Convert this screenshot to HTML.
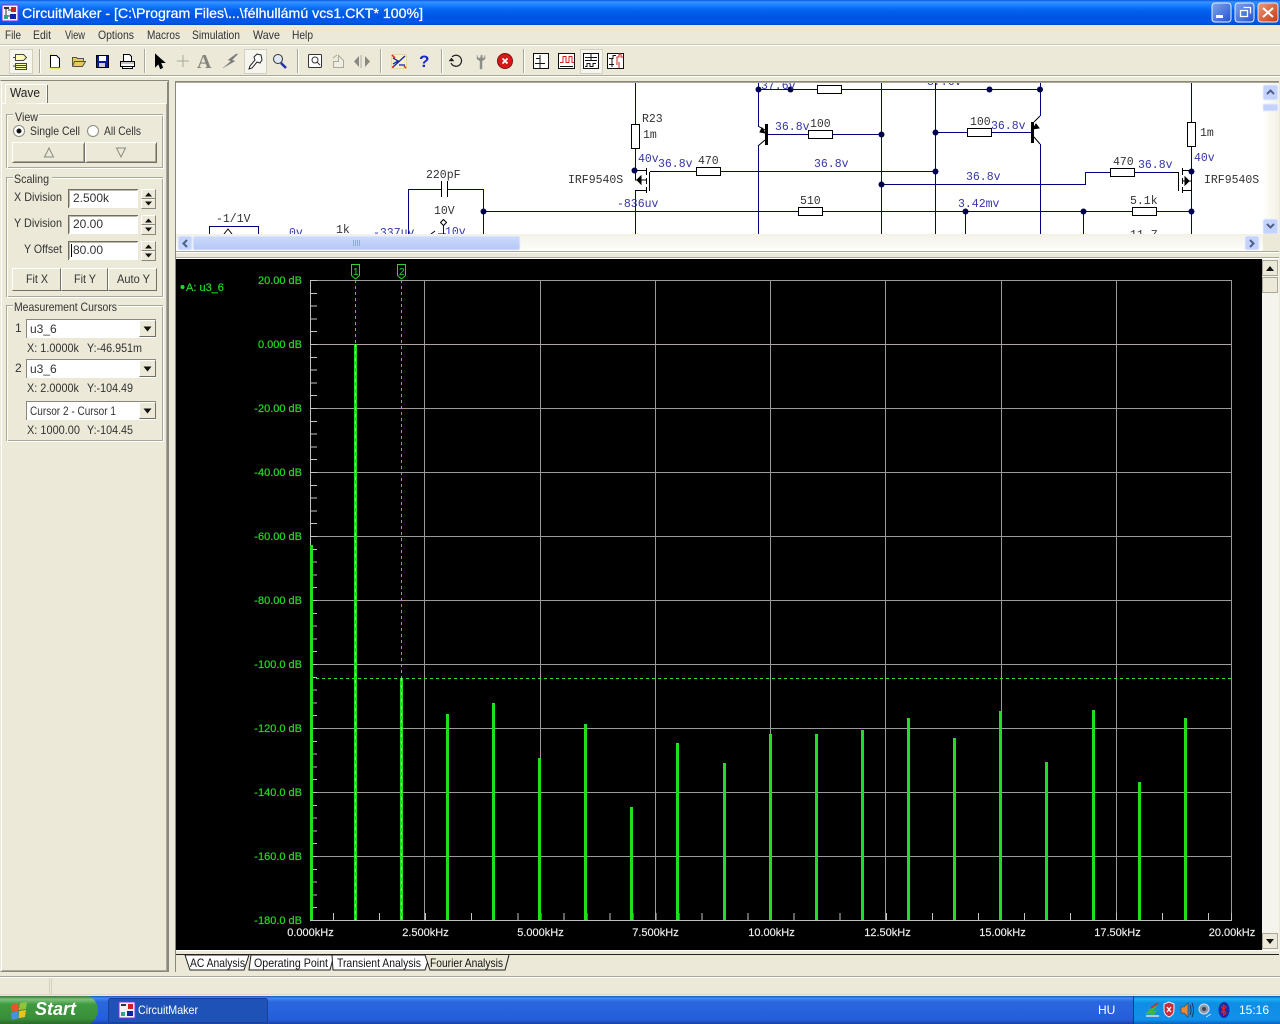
<!DOCTYPE html>
<html><head><meta charset="utf-8"><title>CircuitMaker</title>
<style>
html,body{margin:0;padding:0;background:#ece9d8;overflow:hidden}
svg{display:block}
text{font-family:"Liberation Sans",sans-serif;font-size:12px;fill:#222}
.t{font-size:12px;fill:#333}
.m text,.m{font-family:"Liberation Mono",monospace;font-size:11.5px;fill:#333}
.b{fill:#3535a8 !important}
.y text{font-size:11px;fill:#22dd22;stroke:#22dd22;stroke-width:.2;text-anchor:end}
.x text{font-size:11px;fill:#f0f0f0;stroke:#f0f0f0;stroke-width:.15;text-anchor:middle}
.c{shape-rendering:crispEdges}
</style></head><body>
<svg width="1280" height="1024" viewBox="0 0 1280 1024" xmlns="http://www.w3.org/2000/svg">
<defs>
<linearGradient id="tb" x1="0" y1="0" x2="0" y2="1"><stop offset="0" stop-color="#0a58e0"/><stop offset=".08" stop-color="#3a93ff"/><stop offset=".2" stop-color="#1a80ff"/><stop offset=".42" stop-color="#0262ee"/><stop offset=".7" stop-color="#0054e3"/><stop offset=".9" stop-color="#0058ea"/><stop offset="1" stop-color="#0046c8"/></linearGradient>
<linearGradient id="task" x1="0" y1="0" x2="0" y2="1"><stop offset="0" stop-color="#1f54b8"/><stop offset=".08" stop-color="#3f8cf3"/><stop offset=".2" stop-color="#2a68de"/><stop offset=".85" stop-color="#245edb"/><stop offset="1" stop-color="#1941a5"/></linearGradient>
<linearGradient id="tray" x1="0" y1="0" x2="0" y2="1"><stop offset="0" stop-color="#0c59b9"/><stop offset=".1" stop-color="#19b4f0"/><stop offset=".25" stop-color="#0f8ee6"/><stop offset=".85" stop-color="#1090e8"/><stop offset="1" stop-color="#0a5fc0"/></linearGradient>
<linearGradient id="start" x1="0" y1="0" x2="0" y2="1"><stop offset="0" stop-color="#2f7a2f"/><stop offset=".12" stop-color="#7fc07f"/><stop offset=".3" stop-color="#3f9a3f"/><stop offset=".8" stop-color="#3a8f3a"/><stop offset="1" stop-color="#2a6a2a"/></linearGradient>
<linearGradient id="min" x1="0" y1="0" x2="1" y2="1"><stop offset="0" stop-color="#7fa5f0"/><stop offset="1" stop-color="#2453cf"/></linearGradient>
<linearGradient id="cls" x1="0" y1="0" x2="1" y2="1"><stop offset="0" stop-color="#ea9a80"/><stop offset="1" stop-color="#c9370c"/></linearGradient>
<linearGradient id="sc" x1="0" y1="0" x2="1" y2="0"><stop offset="0" stop-color="#fefefb"/><stop offset="1" stop-color="#f3f1e6"/></linearGradient>
<linearGradient id="sh" x1="0" y1="0" x2="0" y2="1"><stop offset="0" stop-color="#f3f1e6"/><stop offset="1" stop-color="#fefefb"/></linearGradient>
<linearGradient id="thumb" x1="0" y1="0" x2="0" y2="1"><stop offset="0" stop-color="#cddafb"/><stop offset="1" stop-color="#b4c8f6"/></linearGradient>
<clipPath id="sch"><rect x="177" y="83" width="1086" height="151"/></clipPath>
<g id="spin"><rect x="0" y="0" width="15" height="20" fill="#ece9d8"/><path d="M.5 19V.5H14.500M.5 10H14.500" stroke="#fff" fill="none"/><path d="M14.500 .5V19.500H.5M.5 9.500H14.500" stroke="#8a887c" fill="none"/><path d="M7.500 3.500l3.500 4h-7zM7.500 16.500l3.500-4h-7z" fill="#111"/></g>
<g id="drop"><rect x="0" y="0" width="17" height="17" fill="#ece9d8"/><path d="M.5 16V.5H16" stroke="#fff" fill="none"/><path d="M16.500 .5V16.500H.5" stroke="#716f64" fill="none"/><path d="M4.500 6.500h8l-4 5z" fill="#111"/></g>
</defs>

<!-- window background -->
<rect width="1280" height="1024" fill="#ece9d8"/>

<!-- title bar -->
<rect x="0" y="0" width="1280" height="25" fill="url(#tb)"/>
<g class="c"><rect x="2" y="5" width="16" height="16" fill="#f4f0f8" stroke="#8a2be2"/><rect x="4" y="7" width="5" height="2" fill="#333"/><rect x="11" y="7" width="5" height="5" fill="#c22"/><rect x="10" y="14" width="6" height="5" fill="#12a"/><rect x="4" y="15" width="4" height="4" fill="#2a8"/><path d="M6 9v6M8 10h3M8 16h2" stroke="#333"/></g>
<text x="22" y="18" textLength="401" lengthAdjust="spacingAndGlyphs" style="font-size:14px;fill:#fff;stroke:#fff;stroke-width:.25">CircuitMaker - [C:\Program Files\...\félhullámú vcs1.CKT* 100%]</text>
<g>
<rect x="1212" y="3" width="19" height="19" rx="3" fill="url(#min)" stroke="#e8eefc"/><rect x="1216" y="15" width="7" height="3" fill="#fff"/>
<rect x="1235" y="3" width="19" height="19" rx="3" fill="url(#min)" stroke="#e8eefc"/><path d="M1243.500 7.500h7v6M1240.500 10.500h7v6h-7z" fill="none" stroke="#fff" stroke-width="1.300"/>
<rect x="1258" y="3" width="20" height="19" rx="3" fill="url(#cls)" stroke="#f4e4de"/><path d="M1263 8l10 9M1273 8l-10 9" stroke="#fff" stroke-width="2"/>
</g>

<!-- menu -->
<g class="t">
<text class="t" x="5" y="39" textLength="16" lengthAdjust="spacingAndGlyphs">File</text><text class="t" x="33" y="39" textLength="18" lengthAdjust="spacingAndGlyphs">Edit</text><text class="t" x="65" y="39" textLength="20" lengthAdjust="spacingAndGlyphs">View</text><text class="t" x="98" y="39" textLength="36" lengthAdjust="spacingAndGlyphs">Options</text><text class="t" x="147" y="39" textLength="33" lengthAdjust="spacingAndGlyphs">Macros</text><text class="t" x="192" y="39" textLength="48" lengthAdjust="spacingAndGlyphs">Simulation</text><text class="t" x="253" y="39" textLength="27" lengthAdjust="spacingAndGlyphs">Wave</text><text class="t" x="292" y="39" textLength="21" lengthAdjust="spacingAndGlyphs">Help</text>
</g>
<path class="c" d="M0 45.500H1280" stroke="#fff"/><path class="c" d="M0 44.500H1280" stroke="#c9c6b4"/>

<!-- toolbar -->
<path class="c" d="M0 75.500H1280" stroke="#aca899"/><path class="c" d="M0 76.500H1280" stroke="#fff"/>
<g class="c" stroke="#aca899"><path d="M39.500 49V73M144.500 49V73M297.500 49V73M380.500 49V73M441.500 49V73M523.500 49V73"/></g>
<g class="c" stroke="#fff"><path d="M40.500 49V73M145.500 49V73M298.500 49V73M381.500 49V73M442.500 49V73M524.500 49V73"/></g>
<g class="c"><rect x="9.500" y="49.500" width="23" height="24" fill="#f6f5ee" stroke="#d2d0c2"/><rect x="244.500" y="49.500" width="22" height="24" fill="#f6f5ee" stroke="#d2d0c2"/><rect x="580.500" y="49.500" width="22" height="24" fill="#f6f5ee" stroke="#d2d0c2"/></g>
<g fill="none" stroke="#000">
<!-- chip -->
<path d="M15.500 54.500h8l3 3-3 3h-8z" fill="#fdfdb0" stroke="#444"/><path d="M15.500 63.500h11v6h-11z" fill="#fdfdb0" stroke="#444"/><path d="M15 65.500h12M15 67.500h12M13 57.500h3M13 66h3" stroke="#444"/>
<!-- new -->
<path d="M50.500 55.500h6l3 3v9h-9z" fill="#fff"/><path d="M50 54h2M49 68h12" stroke="#e8e800"/>
<!-- open -->
<path d="M72.500 66.500v-9h4l1 1h6v3h-9l-2 5zm2-5h11l-3 5h-10" fill="#e8c860" stroke="#554"/>
<!-- save -->
<rect x="96.500" y="55.500" width="12" height="12" fill="#0a1a9a"/><rect x="99" y="56" width="7" height="5" fill="#fff" stroke="none"/><rect x="99" y="63" width="6" height="4" fill="#ccd" stroke="none"/>
<!-- print -->
<path d="M123.500 54.500h6l2 2v5h-8zM120.500 61.500h14v5h-14zM122.500 66.500h10v2h-10z" fill="#fff"/><path d="M121 63h13" stroke="#888"/>
<!-- arrow -->
<path d="M155.500 54.500l0 12 3-3 2 5 2-1-2-5h4z" fill="#000"/>
<!-- plus -->
<path d="M183 55v12M177 61h12" stroke="#a8a698"/>
</g>
<text x="197" y="68" style="font-family:'Liberation Serif',serif;font-size:20px;font-weight:bold;fill:#85847c">A</text>
<g fill="none">
<path d="M236 54l-8 6 3 1-8 7 12-7-3-1 6-6z" fill="#777" stroke="#999" stroke-width=".5"/>
<path d="M261 55l-4-1-3 3 1 3-5 6-1 3 3-1 5-6 3 1 2-3z" stroke="#222" fill="#fff"/>
<circle cx="278" cy="59" r="4.500" stroke="#333" fill="#dfe8f5"/><path d="M281 63l5 5" stroke="#2233aa" stroke-width="2.500"/>
<rect x="308.500" y="54.500" width="13" height="13" rx="1" stroke="#333" fill="#fff"/><circle cx="315" cy="60" r="3" stroke="#333"/><path d="M317 62l3 3" stroke="#333"/>
<path d="M333.500 61.500h5v-6l5 5v7h-10zM333 58l4-3" stroke="#aaa89a" fill="#f0eee4"/>
<path d="M361 55v13" stroke="#aaa"/><path d="M359 56l-5 5.500 5 5.500zM365 56l5 5.500-5 5.500z" fill="#8a8880"/>
<!-- logic -->
<rect x="391.500" y="54.500" width="15" height="14" fill="#f6efc8" stroke="#e2d8a0"/><path d="M393 67l12-11M393 58l5 3-5 3M399 65h6" stroke="#12a" stroke-width="1.300"/><path d="M392 55l3 3M404 66l2 2M392 67h2" stroke="#d22" stroke-width="1.500"/>
</g>
<text x="419" y="67" style="font-size:17px;font-weight:bold;fill:#1a2ac8">?</text>
<g fill="none">
<path d="M452 57a5.500 5.500 0 1 1-1 6" stroke="#222" stroke-width="1.200"/><path d="M449 61h5l-2.500-3z" fill="#222" stroke="#222" stroke-width=".5"/>
<path d="M477 55v4l3 2v8h2v-8l3-2v-4l-1 3h-1.500l-.5-3h-1l-.5 3H478z" fill="#8a8a82" stroke="#999" stroke-width=".5"/>
<circle cx="505" cy="61" r="7.500" fill="#d81818" stroke="#801010"/><path d="M502.500 58.500l5 5M507.500 58.500l-5 5" stroke="#fff" stroke-width="1.800"/>
<g stroke="#111" class="c">
<rect x="533.500" y="53.500" width="15" height="15" fill="#fff"/><path d="M536 58.500h4v-3M540 55v8M535 63.500h10M540 64v4" />
<rect x="558.500" y="53.500" width="16" height="15" fill="#fff"/><path d="M560 62.500h3v-6h3v6h3v-6h3v6h2" stroke="#c22"/><path d="M560 66.500h13"/>
<rect x="583.500" y="53.500" width="15" height="15" fill="#fff"/><path d="M585 57.500h12M591 54v6M585 60.500h12M585 66.500h2v-3h3v3h3v-3h3"/>
<rect x="607.500" y="53.500" width="16" height="15" fill="#fff"/><path d="M609 58.500h4v-3h3M612 58v9M609 64.500h5" /><path d="M617 65v-8h2v-3h2v3h2M619 62v6" stroke="#c22"/>
</g>
</g>

<!-- left panel -->
<g class="c">
<path d="M.5 80.500H168.500V971.500H.5" fill="#ece9d8" stroke="#8a887c"/>
<path d="M1.500 81.500V970.500" stroke="#fff"/>
<path d="M166.500 104V970.500H2" fill="none" stroke="#aca899"/><path d="M167.500 82V971" stroke="#8a887c"/>
<path d="M2 103.500H166" stroke="#fff"/>
<path d="M5.500 104V84.500H46.500V103" fill="#ece9d8" stroke="#fff"/><path d="M47.500 85V103" stroke="#716f64"/>
</g>
<text x="10" y="97" textLength="30" lengthAdjust="spacingAndGlyphs" style="font-size:12.500px">Wave</text>

<!-- groups -->
<g class="c" fill="none">
<rect x="6.500" y="114.500" width="156" height="53" stroke="#aca899"/><rect x="7.500" y="115.500" width="156" height="53" stroke="#fff"/>
<rect x="6.500" y="177.500" width="156" height="119" stroke="#aca899"/><rect x="7.500" y="178.500" width="156" height="119" stroke="#fff"/>
<rect x="6.500" y="305.500" width="156" height="135" stroke="#aca899"/><rect x="7.500" y="306.500" width="156" height="135" stroke="#fff"/>
</g>
<rect x="13" y="110" width="26" height="10" fill="#ece9d8"/><text class="t" x="15" y="121" textLength="23" lengthAdjust="spacingAndGlyphs">View</text>
<rect x="13" y="173" width="39" height="10" fill="#ece9d8"/><text class="t" x="14" y="183" textLength="35" lengthAdjust="spacingAndGlyphs">Scaling</text>
<rect x="13" y="301" width="105" height="10" fill="#ece9d8"/><text class="t" x="14" y="311" textLength="103" lengthAdjust="spacingAndGlyphs">Measurement Cursors</text>

<!-- radios -->
<circle cx="19" cy="131" r="5.500" fill="#fff" stroke="#8a8a80"/><circle cx="19" cy="131" r="2.500" fill="#111"/>
<text class="t" x="30" y="135" textLength="50" lengthAdjust="spacingAndGlyphs">Single Cell</text>
<circle cx="93" cy="131" r="5.500" fill="#fff" stroke="#8a8a80"/>
<text class="t" x="104" y="135" textLength="37" lengthAdjust="spacingAndGlyphs">All Cells</text>

<!-- up/down buttons -->
<g class="c" fill="none">
<path d="M12.500 161.500V142.500H84" stroke="#fff"/><path d="M84.500 142.500V162.500H12.500" stroke="#716f64"/><path d="M83.500 144V161.500H14" stroke="#aca899"/>
<path d="M85.500 161.500V142.500H156" stroke="#fff"/><path d="M156.500 142.500V162.500H85.500" stroke="#716f64"/><path d="M155.500 144V161.500H87" stroke="#aca899"/>
</g>
<path d="M44.500 157l4.500-9 4.500 9z" fill="none" stroke="#8d8b80"/><path d="M116.500 148l4.500 9 4.500-9z" fill="none" stroke="#8d8b80"/>

<!-- scaling -->
<text class="t" x="14" y="201" textLength="48" lengthAdjust="spacingAndGlyphs">X Division</text>
<text class="t" x="14" y="227" textLength="48" lengthAdjust="spacingAndGlyphs">Y Division</text>
<text class="t" x="24" y="253" textLength="38" lengthAdjust="spacingAndGlyphs">Y Offset</text>
<g class="c">
<rect x="68" y="189" width="70" height="19" fill="#fff"/><path d="M68.500 208V189.500H138" fill="none" stroke="#716f64"/><path d="M69.500 207V190.500H137" fill="none" stroke="#bbb8a8"/>
<rect x="68" y="215" width="70" height="19" fill="#fff"/><path d="M68.500 234V215.500H138" fill="none" stroke="#716f64"/><path d="M69.500 233V216.500H137" fill="none" stroke="#bbb8a8"/>
<rect x="68" y="241" width="70" height="19" fill="#fff"/><path d="M68.500 260V241.500H138" fill="none" stroke="#716f64"/><path d="M69.500 259V242.500H137" fill="none" stroke="#bbb8a8"/>
<path d="M71.500 244V257" stroke="#000"/>
</g>
<text class="t" x="73" y="202">2.500k</text><text class="t" x="73" y="228">20.00</text><text class="t" x="73" y="254">80.00</text>
<use href="#spin" x="141" y="189"/><use href="#spin" x="141" y="215"/><use href="#spin" x="141" y="241"/>
<g class="c" fill="none">
<path d="M12.500 289.500V268.500H60" stroke="#fff"/><path d="M60.500 268.500V290.500H12.500" stroke="#716f64"/>
<path d="M61.500 289.500V268.500H107" stroke="#fff"/><path d="M107.500 268.500V290.500H61.500" stroke="#716f64"/>
<path d="M108.500 289.500V268.500H156" stroke="#fff"/><path d="M156.500 268.500V290.500H108.500" stroke="#716f64"/>
</g>
<text class="t" x="26" y="283" textLength="22" lengthAdjust="spacingAndGlyphs">Fit X</text><text class="t" x="74" y="283" textLength="22" lengthAdjust="spacingAndGlyphs">Fit Y</text><text class="t" x="117" y="283" textLength="33" lengthAdjust="spacingAndGlyphs">Auto Y</text>

<!-- cursors -->
<text class="t" x="15" y="332">1</text><text class="t" x="15" y="372">2</text>
<g class="c">
<rect x="26" y="319" width="130" height="19" fill="#fff"/><path d="M26.500 338V319.500H156" fill="none" stroke="#8a887c"/>
<rect x="26" y="359" width="130" height="19" fill="#fff"/><path d="M26.500 378V359.500H156" fill="none" stroke="#8a887c"/>
<rect x="26" y="401" width="130" height="19" fill="#fff"/><path d="M26.500 420V401.500H156" fill="none" stroke="#8a887c"/>
</g>
<use href="#drop" x="139" y="320"/><use href="#drop" x="139" y="360"/><use href="#drop" x="139" y="402"/>
<text class="t" x="30" y="333">u3_6</text><text class="t" x="30" y="373">u3_6</text><text class="t" x="30" y="415" textLength="86" lengthAdjust="spacingAndGlyphs">Cursor 2 - Cursor 1</text>
<text class="t" x="27" y="352" textLength="52" lengthAdjust="spacingAndGlyphs">X: 1.0000k</text><text class="t" x="87" y="352" textLength="55" lengthAdjust="spacingAndGlyphs">Y:-46.951m</text>
<text class="t" x="27" y="392" textLength="52" lengthAdjust="spacingAndGlyphs">X: 2.0000k</text><text class="t" x="87" y="392" textLength="46" lengthAdjust="spacingAndGlyphs">Y:-104.49</text>
<text class="t" x="27" y="434" textLength="53" lengthAdjust="spacingAndGlyphs">X: 1000.00</text><text class="t" x="87" y="434" textLength="46" lengthAdjust="spacingAndGlyphs">Y:-104.45</text>

<!-- right area frame -->
<g class="c" fill="none">
<path d="M175.500 972V81.500H1279" stroke="#8a887c" stroke-width="1"/>
<path d="M176 82.500H1279" stroke="#aca899"/>
</g>

<!-- schematic -->
<rect x="176" y="83" width="1087" height="151" fill="#fff"/>
<g clip-path="url(#sch)">
<g class="c" fill="none" stroke="#000080">
<path d="M635.500 82V124M635.500 148V168M635.500 190V240"/>
<path d="M758.500 82V126M758.500 146V240"/>
<path d="M881.500 82V240M935.500 82V240M1040.500 82V116M1040.500 144V240M1191.500 82V122M1191.500 146V240"/>
<path d="M758 89.500H817M841 89.500H1040"/>
<path d="M766 134.500H808M832 134.500H881"/>
<path d="M935 132.500H967M991 132.500H1031"/>
<path d="M660 171.500H696M720 171.500H935"/>
<path d="M881 184.500H1085.500V172.500H1110M1134 172.500H1172"/>
<path d="M484 211.500H798M822 211.500H1132M1157 211.500H1191"/>
<path d="M965.500 211V240M1083.500 211V240"/>
<path d="M408.500 234V189.500H441M447 189.500H483.500V240"/>
<path d="M209.500 240V226.500H258.500V240"/>
<path d="M443.500 225V234"/>
</g>
<g class="c" fill="none" stroke="#000">
<path d="M441.500 181V197M447.500 181V197"/>
<rect x="631.500" y="124.500" width="8" height="24" fill="#fff"/>
<rect x="1187.500" y="122.500" width="8" height="24" fill="#fff"/>
<rect x="817.500" y="85.500" width="24" height="8" fill="#fff"/>
<rect x="808.500" y="130.500" width="24" height="8" fill="#fff"/>
<rect x="967.500" y="128.500" width="24" height="8" fill="#fff"/>
<rect x="696.500" y="167.500" width="24" height="8" fill="#fff"/>
<rect x="1110.500" y="168.500" width="24" height="8" fill="#fff"/>
<rect x="798.500" y="207.500" width="24" height="8" fill="#fff"/>
<rect x="1132.500" y="207.500" width="24" height="8" fill="#fff"/>
</g>
<rect x="765" y="124" width="3" height="21" fill="#000"/><rect x="1031" y="122" width="3" height="21" fill="#000"/>
<g fill="none" stroke="#000">
<path d="M758 126l7 4M765 140l-7 6M1040 116l-6 6M1034 137l6 7"/>
<path d="M760 132l5 1-3-5z" fill="#000"/><path d="M1036 124l-3 5 6-1z" fill="#000"/>
<!-- left mosfet -->
<path class="c" d="M635.500 168V180M635 170.500h11M635 190.500h11M646.500 168v7M646.500 178v6M646.500 187v6M649.500 172v19M650 171.500h10"/>
<path d="M635 180h11M641 176v8l-4-4z" fill="#000"/>
<!-- right mosfet -->
<path class="c" d="M1191.500 168V191M1191 170.500h-9M1191 190.500h-9M1182.500 168v7M1182.500 178v6M1182.500 187v6M1178.500 172v19M1172 172.500h7"/>
<path d="M1191 181h-9M1185 177v8l4-4z" fill="#000"/>
</g>
<path d="M443.500 219.500l3 3-3 3-3-3z" fill="#fff" stroke="#000"/>
<path d="M224 234l4-5 4 5" fill="none" stroke="#000"/>
<path d="M431 234l4-3M438 234h8" stroke="#000"/>
<g fill="#000050">
<circle cx="758.500" cy="89.500" r="3"/><circle cx="790.500" cy="89.500" r="3"/><circle cx="989.500" cy="89.500" r="3"/><circle cx="1040" cy="89.500" r="3"/>
<circle cx="881.500" cy="134.500" r="3"/><circle cx="935.500" cy="132.500" r="3"/><circle cx="935.500" cy="171.500" r="3"/><circle cx="881.500" cy="184.500" r="3"/>
<circle cx="634.500" cy="170.500" r="3"/><circle cx="1191.500" cy="171.500" r="3"/><circle cx="483.500" cy="211.500" r="3"/><circle cx="965.500" cy="211.500" r="3"/><circle cx="1083.500" cy="211.500" r="3"/><circle cx="1191.500" cy="211.500" r="3"/>
</g>
<g class="m">
<text class="m" x="642" y="122">R23</text><text class="m" x="643" y="138">1m</text>
<text class="m" x="698" y="164">470</text><text class="m" x="568" y="183">IRF9540S</text>
<text class="m" x="810" y="127">100</text><text class="m" x="970" y="125">100</text><text class="m" x="800" y="204">510</text>
<text class="m" x="1113" y="165">470</text><text class="m" x="1130" y="204">5.1k</text><text class="m" x="1200" y="136">1m</text><text class="m" x="1204" y="183">IRF9540S</text>
<text class="m" x="426" y="178">220pF</text><text class="m" x="434" y="214">10V</text><text class="m" x="216" y="222">-1/1V</text><text class="m" x="336" y="233">1k</text><text class="m" x="1130" y="238">11.7</text>
<text class="m b" x="638" y="162">40v</text><text class="m b" x="658" y="167">36.8v</text><text class="m b" x="617" y="207">-836uv</text>
<text class="m b" x="761" y="89">37.6v</text><text class="m b" x="775" y="130">36.8v</text><text class="m b" x="814" y="167">36.8v</text>
<text class="m b" x="927" y="85">37.6v</text><text class="m b" x="991" y="129">36.8v</text><text class="m b" x="966" y="180">36.8v</text><text class="m b" x="958" y="207">3.42mv</text>
<text class="m b" x="1138" y="168">36.8v</text><text class="m b" x="1194" y="161">40v</text>
<text class="m b" x="289" y="236">0v</text><text class="m b" x="373" y="236">-337uv</text><text class="m b" x="445" y="235">10v</text>
</g>
</g>

<!-- schematic scrollbars -->
<rect x="1263" y="83" width="16" height="151" fill="url(#sc)"/>
<rect x="1263" y="85" width="15" height="15" rx="2" fill="#c3d3fb" stroke="#e8eefc"/><path d="M1267 94l3.500-3.500 3.500 3.500" fill="none" stroke="#4d6185" stroke-width="2"/>
<rect x="1263" y="104" width="15" height="7" rx="1" fill="#c3d3fb" stroke="#e8eefc"/>
<rect x="1263" y="219" width="15" height="15" rx="2" fill="#c3d3fb" stroke="#e8eefc"/><path d="M1267 224l3.500 3.500 3.500-3.500" fill="none" stroke="#4d6185" stroke-width="2"/>
<rect x="176" y="234" width="1087" height="17" fill="url(#sh)"/>
<rect x="1263" y="234" width="16" height="17" fill="#ece9d8"/>
<rect x="178" y="236" width="14" height="14" rx="2" fill="#c3d3fb" stroke="#e8eefc"/><path d="M187 240l-3.500 3.500 3.500 3.500" fill="none" stroke="#4d6185" stroke-width="2"/>
<rect x="193" y="236" width="327" height="14" rx="2" fill="url(#thumb)" stroke="#e8eefc"/><path class="c" d="M353.500 240v6M355.500 240v6M357.500 240v6M359.500 240v6" stroke="#8ea8e8"/>
<rect x="1245" y="236" width="14" height="14" rx="2" fill="#c3d3fb" stroke="#e8eefc"/><path d="M1250 240l3.500 3.500-3.500 3.500" fill="none" stroke="#4d6185" stroke-width="2"/>
<path class="c" d="M176 251.500H1279" stroke="#aca899"/><path class="c" d="M176 252.500H1279" stroke="#fff"/>
<path class="c" d="M176 257.500H1279" stroke="#aca899"/><path class="c" d="M176 258.500H1279" stroke="#fff"/>

<!-- plot -->
<rect x="176" y="259" width="1086" height="691" fill="#000"/>
<g class="c" fill="none" stroke="#9a9a9a">
<path d="M310 280.500H1231.500V920M310 408.500H1231M310 472.500H1231M310 536.500H1231M310 600.500H1231M310 664.500H1231M310 728.500H1231M310 792.500H1231M310 856.500H1231"/>
<path d="M424.500 280V920M540.500 280V920M655.500 280V920M770.500 280V920M885.500 280V920M1001.500 280V920M1116.500 280V920"/>
<path d="M310 344.500H1231" stroke="#b0a2a8"/>
<path d="M310.500 280V920M310 920.500H1232" stroke="#c0c0c0"/>
</g>
<line class="c" x1="313.500" y1="280" x2="313.500" y2="921" stroke="#c4c4c4" stroke-width="7" stroke-dasharray="1 11.800"/>
<line class="c" x1="310" y1="916.500" x2="1232" y2="916.500" stroke="#c4c4c4" stroke-width="7" stroke-dasharray="1 22.030"/>
<!-- spikes -->
<g class="c" stroke="#1fe01f" stroke-width="3">
<path d="M311.500 545V920M355.500 344V920M401.500 678V920M447.500 714V920M493.500 703V920M539.500 758V920M585.500 724V920M631.500 807V920M677.500 743V920M724.500 763V920M770.500 734V920M816.500 734V920M862.500 730V920M908.500 718V920M954.500 738V920M1000.500 711V920M1046.500 762V920M1093.500 710V920M1139.500 782V920M1185.500 718V920"/>
</g>
<!-- cursors -->
<g class="c" stroke="#30e030" stroke-dasharray="3 3">
<path d="M355.500 280V344M401.500 280V678M310 678.500H1231"/>
</g>
<g class="c" stroke="#8ef08e" stroke-dasharray="3 4"><path d="M355.500 344V920M401.500 678V920"/></g>
<g fill="#000" stroke="#2fd02f">
<path d="M351.500 264.500h8v11l-4 3.500-4-3.500z"/><path d="M397.500 264.500h8v11l-4 3.500-4-3.500z"/>
</g>
<text x="353" y="275" style="font-size:10px;fill:#2fd02f">1</text><text x="399" y="275" style="font-size:10px;fill:#2fd02f">2</text>
<circle cx="182.500" cy="287" r="2" fill="#22dd22"/>
<text x="186" y="291" style="font-size:11px;fill:#22dd22;stroke:#22dd22;stroke-width:.2">A: u3_6</text>
<g class="y">
<text x="302" y="284">20.00 dB</text><text x="302" y="348">0.000 dB</text><text x="302" y="412">-20.00 dB</text><text x="302" y="476">-40.00 dB</text><text x="302" y="540">-60.00 dB</text><text x="302" y="604">-80.00 dB</text><text x="302" y="668">-100.0 dB</text><text x="302" y="732">-120.0 dB</text><text x="302" y="796">-140.0 dB</text><text x="302" y="860">-160.0 dB</text><text x="302" y="924">-180.0 dB</text>
</g>
<g class="x">
<text x="310.500" y="936">0.000kHz</text><text x="425.500" y="936">2.500kHz</text><text x="540.500" y="936">5.000kHz</text><text x="655.500" y="936">7.500kHz</text><text x="771.500" y="936">10.00kHz</text><text x="887.500" y="936">12.50kHz</text><text x="1002.500" y="936">15.00kHz</text><text x="1117.500" y="936">17.50kHz</text><text x="1232" y="936">20.00kHz</text>
</g>

<!-- plot scrollbar -->
<rect x="1262" y="259" width="17" height="691" fill="#f5f4ec"/>
<rect x="1262.500" y="260.500" width="15" height="15" fill="#ece9d8" stroke="#aca899"/><path d="M1266 271h8l-4-5z" fill="#111"/>
<rect x="1262.500" y="277.500" width="15" height="15" fill="#ece9d8" stroke="#aca899"/>
<rect x="1262.500" y="933.500" width="15" height="15" fill="#ece9d8" stroke="#aca899"/><path d="M1266 939h8l-4 5z" fill="#111"/>

<!-- analysis tabs -->
<path class="c" d="M176 950.500H1279" stroke="#fff"/>
<rect x="176" y="955" width="1103" height="18" fill="#ece9d8"/>
<path class="c" d="M176 954.500H1279" stroke="#222"/>
<g stroke="#222" stroke-width="1">
<path d="M185 955l5 15h54l5-15z" fill="#fff"/>
<path d="M249 955l-2 15h81l4-15z" fill="#fff" transform="translate(2 0)"/>
<path d="M332 955l1 15h92l5-15z" fill="#fff"/>
<path d="M425 955l5 15h75l4-15" fill="#ece9d8"/>
</g>
<text x="190" y="967" textLength="55" lengthAdjust="spacingAndGlyphs" style="font-size:12px;fill:#111">AC Analysis</text>
<text x="254" y="967" textLength="74" lengthAdjust="spacingAndGlyphs" style="font-size:12px;fill:#111">Operating Point</text>
<text x="337" y="967" textLength="84" lengthAdjust="spacingAndGlyphs" style="font-size:12px;fill:#111">Transient Analysis</text>
<text x="430" y="967" textLength="73" lengthAdjust="spacingAndGlyphs" style="font-size:12px;fill:#111">Fourier Analysis</text>

<!-- status bar -->
<path class="c" d="M0 976.500H1280" stroke="#aca899"/><path class="c" d="M0 977.500H1280" stroke="#fff"/>
<path class="c" d="M49.500 978V995M51.500 978V995" stroke="#d5d2c1"/>
<path class="c" d="M0 994.500H1280" stroke="#ddd9c6"/>

<!-- taskbar -->
<rect x="0" y="996" width="1280" height="28" fill="url(#task)"/>
<path d="M0 996H90q8 6 8 14t-8 14H0z" fill="url(#start)"/>
<g class="c"><path d="M11 1005l7-2 1 7-7 2z" fill="#e8552a"/><path d="M20 1003l7-1 -1 7-7 1z" fill="#8ac83a"/><path d="M11 1013l7-2 1 7-7 2z" fill="#4a90e0"/><path d="M19 1011l7-1-1 7-6 1z" fill="#f0c020"/></g>
<text x="35" y="1015" style="font-size:18px;font-weight:bold;font-style:italic;fill:#fff">Start</text>
<rect x="108.500" y="998.500" width="159" height="24" rx="2" fill="#1e52b7" stroke="#1a3f96"/>
<rect x="119" y="1002" width="16" height="16" fill="#f4f0f8" stroke="#8a2be2"/><rect x="128" y="1004" width="5" height="5" fill="#c22"/><rect x="127" y="1011" width="6" height="5" fill="#12a"/><rect x="121" y="1012" width="4" height="4" fill="#2a8"/><rect x="121" y="1004" width="5" height="2" fill="#333"/>
<text x="138" y="1014" textLength="60" lengthAdjust="spacingAndGlyphs" style="font-size:12px;fill:#fff">CircuitMaker</text>
<text x="1098" y="1014" style="font-size:12px;fill:#fff">HU</text>
<rect x="1134" y="996" width="146" height="28" fill="url(#tray)"/>
<path class="c" d="M1133.500 996V1024" stroke="#0c3a9a"/>
<g>
<path d="M1145 1014l8-8 4-1-4 7 5-3-4 6z" fill="#3db83d"/><path d="M1151 1008l7-5" stroke="#d22" stroke-width="1.500"/><path d="M1146 1016h13" stroke="#ddd" stroke-width="1.500"/>
<path d="M1164 1004l5-2 5 2v6q0 5-5 7-5-2-5-7z" fill="#c82c3c" stroke="#eee"/><path d="M1167 1007l4 5M1171 1007l-4 5" stroke="#fff" stroke-width="1.300"/>
<path d="M1181 1007h3l4-4v14l-4-4h-3z" fill="#e88a3c" stroke="#533" stroke-width=".6"/><path d="M1190 1005q2 5 0 10M1192 1003q3 7 0 14" fill="none" stroke="#223" stroke-width=".8"/>
<circle cx="1204" cy="1009" r="5" fill="#8a9aaa" stroke="#dde"/><circle cx="1204" cy="1009" r="2" fill="#445"/><path d="M1206 1017l5-3" stroke="#dde"/>
<ellipse cx="1224" cy="1010" rx="5.500" ry="8" fill="#1a2aa8"/><path d="M1221 1006l5 7-2.500 2v-10l2.500 2-5 6" fill="none" stroke="#d22" stroke-width="1.200"/>
</g>
<text x="1239" y="1014" style="font-size:12px;fill:#fff">15:16</text>
</svg>
</body></html>
